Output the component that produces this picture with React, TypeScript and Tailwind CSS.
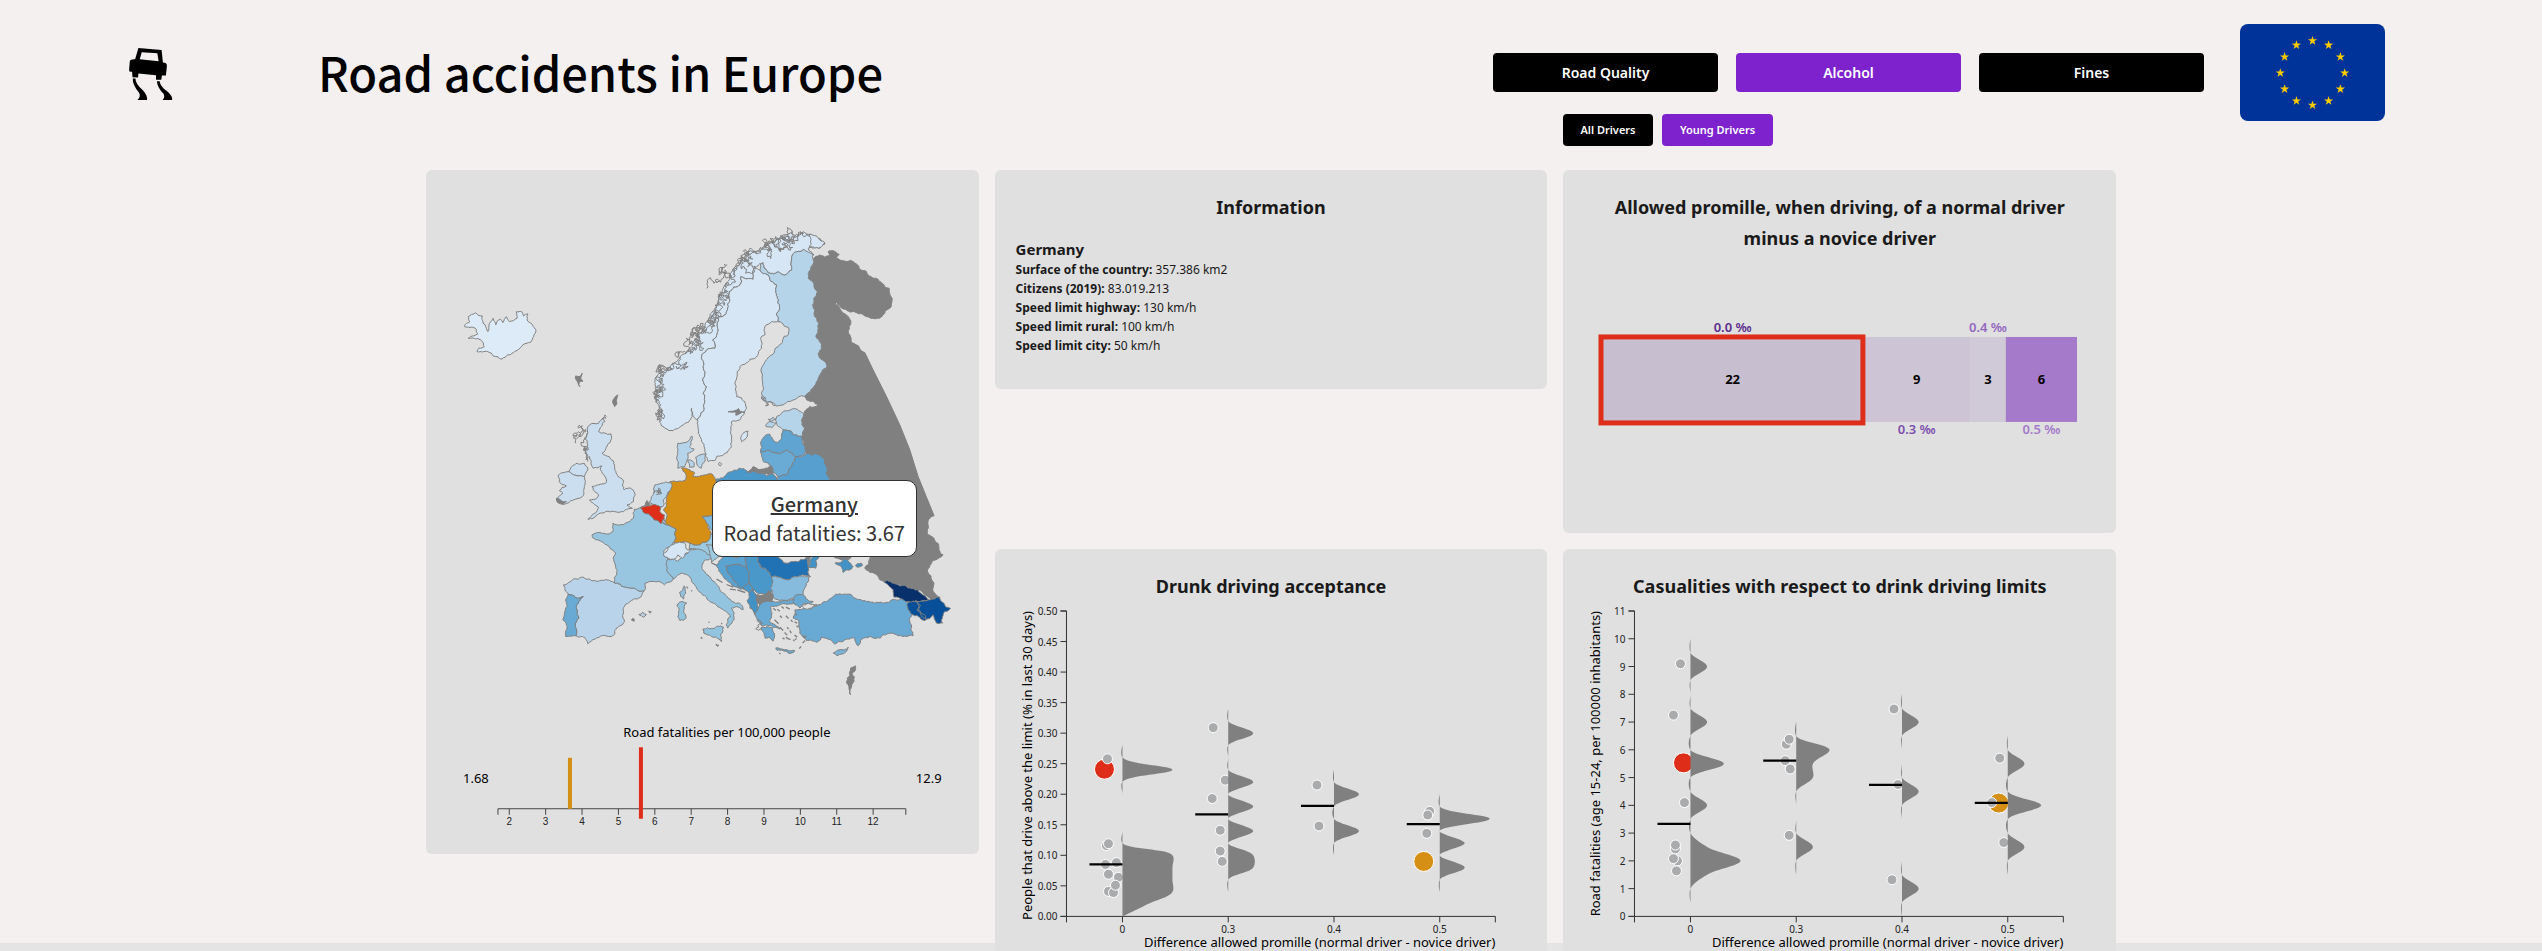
import React from "react";

const UI = "font-['Noto_Sans','Open_Sans',sans-serif]";
const SOURCE = "font-['Noto_Sans_CJK_JP','Noto_Sans',sans-serif]";

type Point = [number, number];
type Region = { pts: string; fill: string; coast?: boolean };
type Sheet = { ox: number; oy: number; sx: number; sy: number; regions: Region[] };

const GREY = "#808080";
const ICE = "#d6e6f5";
const SOFT = "#b5d4e9";

const sheets: Sheet[] = [
  {
    ox: 214, oy: 50, sx: 3, sy: 3,
    regions: [
      { fill: GREY, pts: "520,120 540,105 555,112 570,105 565,95 580,92 598,103 590,115 610,122 650,132 680,155 700,175 725,190 748,205 757,240 750,265 730,285 705,296 680,290 650,278 620,270 605,265 590,248 586,252 605,272 620,285 632,300 628,320 630,345 636,368 650,375 665,392 675,398" +
        " 676,400 700,450 725,500 740,530 780,615 810,690 835,770 860,832 883,888 865,903 865,945 894,970 910,1005 863,1055 880,1085 878,1110 898,1132 880,1145 860,1128 835,1110 805,1105 770,1093 732,1084 710,1065 675,1045 690,1015 695,980 600,900 570,780 550,715 500,705 497,690 487,650 485,600 498,570 510,560 535,555 500,540 495,530 530,485 562,440 535,400 545,385 528,350 537,310 518,255 533,215 505,175 512,150" },
      { fill: SOFT, pts: "360,130 370,128 385,158 415,155 435,165 455,150 455,110 470,95 490,88 520,105 522,125 512,150 505,175 533,215 518,255 537,310 528,350 545,385 535,400 562,440 530,485 495,530 460,540 430,555 408,558 390,545 365,535 370,500 363,450 375,425 395,405 415,380 432,350 445,345 445,322 425,308 415,305 418,270 412,230 410,195 385,165 360,150" },
      { fill: ICE, pts: "60,600 58,560 50,540 48,510 45,480 60,460 90,440 120,415 155,380 175,350 195,320 210,290 225,265 235,230 250,205 270,175 285,140 310,115 330,85 345,95 370,80 400,65 430,45 455,35 470,50 490,35 510,45 540,55 555,72 540,85 505,85 522,105 490,88 470,95 455,110 455,150 435,165 415,155 385,158 370,128 345,145 340,178 303,170 300,195 268,215 270,240 248,290 235,290 235,330 218,360 225,385 200,390 185,410 190,440 188,480 200,500 190,520 195,545 180,590 172,600 160,590 155,565 157,590 130,615 100,632 75,625" },
      { fill: ICE, pts: "345,145 360,150 385,165 410,195 412,230 418,270 415,305 395,305 375,320 375,345 362,355 365,385 330,418 305,435 292,455 285,490 290,530 315,545 320,565 300,600 275,605 272,640 275,680 262,698 230,710 225,722 205,725 195,690 180,650 172,610 180,590 195,545 190,520 200,500 188,480 190,440 185,410 200,390 225,385 218,360 235,330 235,290 248,290 270,240 268,215 300,195 303,170 340,178" },
      { fill: ICE, coast: true, pts: "62,605 58,560 54,540 52,510 50,480 64,462 92,442 122,418 157,384 177,354 197,322 212,292 227,267 239,232 254,207 274,178 289,142 313,117 333,92 347,97 372,84 402,68 432,49 455,42 470,50 490,38 512,48 540,60" },
      { fill: ICE, coast: true, pts: "57,540 59,510 57,484 70,468 98,448" },
      { fill: ICE, coast: true, pts: "160,388 180,356 200,324 214,296 230,270 240,236" },
      { fill: ICE, coast: true, pts: "280,165 296,138 318,116 336,100 350,102 376,88 404,74 430,60 444,84 462,50" },
      { fill: ICE, coast: true, pts: "200,205 222,190 250,175 270,160 255,150 238,165 245,150 262,135" },
      { fill: ICE, pts: "508,42 530,48 540,60 556,70 545,80 525,84 508,82 512,65" },
      { fill: GREY, pts: "265,576 285,572 296,566 300,575 315,577 298,582 288,586 290,578" },
      { fill: ICE, coast: true, pts: "366,538 378,548 390,545 405,557" },
      { fill: SOFT, pts: "410,590 440,573 495,578 485,600 487,650 470,645 450,632 430,630 410,610" },
      { fill: SOFT, pts: "377,618 392,605 408,610 396,624" },
      { fill: SOFT, pts: "385,598 400,592 408,598 396,604" },
      { fill: "#60a5d1", pts: "362,695 362,670 370,655 390,643 400,660 415,668 425,655 430,630 450,632 470,645 487,650 498,695 470,710 440,690 380,692" },
      { fill: "#6aabd5", pts: "362,695 380,692 440,690 470,710 450,745 445,760 415,772 395,755 395,740 370,725" },
      { fill: GREY, pts: "340,740 395,738 398,762 320,757" },
      { fill: "#569fce", pts: "470,710 500,702 550,715 570,780 570,800 410,800 415,772 445,760 450,745" },
      { fill: "#4a97ca", pts: "228,778 262,760 300,745 312,746 322,757 400,762 412,775 412,800 230,800" },
      { fill: ICE, pts: "305,665 304,650 312,638 325,634 318,655" },
      { fill: ICE, pts: "238,728 245,732 242,738 236,735" },
    ],
  },
  {
    ox: -6, oy: -10, sx: 2.8, sy: 3,
    regions: [
      { fill: "#ddeaf7", pts: "125,500 140,485 135,470 155,458 175,468 182,495 190,515 195,490 205,475 212,495 225,478 232,488 242,470 250,485 262,482 272,475 270,455 285,455 290,468 302,462 300,480 315,495 325,512 318,530 300,550 280,565 262,578 245,585 230,597 205,588 190,575 160,575 165,565 180,560 175,545 162,535 135,535 150,528 162,522 155,505" },
      { fill: GREY, pts: "436,648 446,650 454,640 450,656 456,664 446,668 448,680 442,668" },
      { fill: GREY, pts: "545,740 540,722 555,705 550,720 552,728" },
      { fill: "#cadef0", pts: "475,795 500,790 512,775 518,785 508,800 500,815 535,822 535,840 520,870 510,880 530,890 545,920 555,950 568,960 572,990 590,985 602,1000 598,1025 580,1035 595,1045 570,1055 545,1055 520,1055 500,1062 485,1075 470,1078 490,1060 500,1042 490,1035 475,1020 495,1015 500,1005 485,990 482,980 500,975 520,970 518,950 505,930 510,918 485,925 480,905 475,890 465,900 460,870 470,855 460,835 470,820" },
      { fill: "#cadef0", coast: true, pts: "470,905 462,880 470,862 458,840 468,820" },
      { fill: "#cadef0", coast: true, pts: "435,850 440,820 455,798 452,815 440,835" },
      { fill: "#cadef0", coast: true, pts: "512,780 518,765 522,770" },
      { fill: "#cadef0", pts: "440,910 460,910 470,930 460,950 440,948 415,935 425,920" },
      { fill: "#cadef0", pts: "388,945 400,938 415,935 440,948 460,950 460,980 455,1010 430,1020 400,1033 382,1020 400,1000 390,992 410,978 390,965" },
      { fill: GREY, pts: "382,1015 395,1022 410,1025 398,1033 384,1026" },
      { fill: "#b9d4ea", pts: "402,1275 430,1257 480,1262 543,1268 560,1272 600,1285 628,1292 620,1308 585,1328 570,1355 572,1380 550,1405 535,1430 490,1438 470,1452 455,1430 437,1428 435,1400 445,1375 440,1350 445,1325 457,1310 415,1303" },
      { fill: "#68aad4", pts: "415,1303 457,1310 445,1325 440,1350 445,1375 435,1400 437,1428 408,1430 410,1395 400,1380 412,1340" },
      { fill: "#b9d4ea", pts: "613,1364 624,1357 634,1364 626,1372" },
      { fill: GREY, pts: "592,1380 598,1376 600,1384" },
      { fill: GREY, pts: "640,1354 648,1356 644,1360" },
      { fill: "#98c6e0", pts: "540,1090 560,1095 575,1090 598,1075 600,1048 620,1042 635,1060 655,1065 668,1085 690,1095 718,1108 708,1150 690,1165 682,1185 695,1195 692,1215 700,1240 710,1255 685,1275 650,1265 630,1270 628,1292 600,1285 560,1272 543,1268 548,1220 548,1180 530,1160 515,1150 485,1135 482,1125 500,1118 530,1122 540,1115" },
      { fill: "#92c3df", pts: "692,1200 710,1195 722,1205 750,1180 755,1168 780,1165 815,1175 825,1190 795,1205 790,1220 800,1240 825,1265 840,1290 860,1310 895,1330 905,1350 885,1340 872,1345 880,1360 875,1385 862,1405 858,1395 870,1370 850,1350 830,1335 800,1310 775,1285 760,1265 755,1250 735,1240 710,1258 695,1240" },
      { fill: "#92c3df", pts: "720,1335 735,1325 747,1330 745,1375 728,1382 722,1370" },
      { fill: "#92c3df", pts: "727,1298 740,1278 744,1300 738,1318" },
      { fill: "#92c3df", pts: "792,1408 820,1406 850,1402 845,1445 820,1432 795,1420" },
      { fill: "#9ccae1", pts: "755,1150 780,1155 805,1145 818,1120 850,1120 850,1180 820,1190 790,1170 755,1168" },
      { fill: "#d48f14", pts: "732,925 750,928 770,940 765,950 800,945 818,942 830,965 835,1000 845,1050 790,1070 815,1120 805,1145 780,1155 755,1150 730,1148 708,1150 718,1108 690,1095 682,1050 690,1020 700,965 745,960" },
      { fill: "#7db8dc", pts: "793,1072 835,1060 835,1120 810,1105" },
      { fill: "#d6e6f5", pts: "682,1185 700,1160 715,1150 740,1148 745,1165 757,1172 742,1182 735,1195 722,1185 710,1198 695,1195" },
      { fill: "#b6d5ea", pts: "640,1030 655,1000 658,975 675,970 702,968 690,1010 682,1020 680,1040 660,1035" },
      { fill: "#de2d18", pts: "618,1045 640,1038 660,1035 675,1042 672,1055 685,1065 684,1078 675,1092 655,1080 648,1070 635,1062" },
      { fill: "#d6e6f5", pts: "678,1080 687,1082 685,1092" },
      { fill: GREY, pts: "620,1042 636,1022 645,1034" },
      { fill: SOFT, pts: "722,925 720,900 722,850 745,848 762,828 755,860 768,868 750,880 748,900 740,922" },
      { fill: SOFT, pts: "750,900 765,905 768,920 755,922" },
      { fill: SOFT, pts: "772,892 798,882 798,905 788,925 775,912" },
      { fill: SOFT, coast: true, pts: "655,1000 668,985 675,1000 662,1004" },
    ],
  },
  {
    ox: 254, oy: 370, sx: 3, sy: 3,
    regions: [
      { fill: "#9ccae1", pts: "78,15 130,15 130,50 95,68 90,45" },
      { fill: "#5ba3d0", pts: "95,70 115,72 135,50 200,45 200,80 138,78 145,100 165,125 195,150 170,142 130,110 115,85" },
      { fill: "#4a97ca", pts: "138,78 200,80 208,115 190,145 160,122 145,100" },
      { fill: "#4a97ca", pts: "200,45 235,45 245,85 270,100 280,130 275,155 235,162 210,140 208,115 200,80" },
      { fill: "#4a97ca", pts: "190,145 208,128 220,145 208,160" },
      { fill: "#4292c6", pts: "208,158 220,148 228,165 232,185 235,205 225,225 210,205" },
      { fill: "#2171b5", pts: "232,45 390,45 385,80 392,110 360,108 320,120 275,112 270,100 245,85" },
      { fill: GREY, pts: "378,45 402,45 385,78" },
      { fill: "#4292c6", pts: "398,45 430,45 408,62 408,85 385,82" },
      { fill: "#86bbdd", pts: "275,112 320,120 360,108 388,112 372,150 370,165 345,175 320,182 280,172 272,145" },
      { fill: GREY, pts: "228,165 265,153 280,165 275,185 240,195 232,185" },
      { fill: "#68aad4", pts: "225,225 235,205 240,195 275,185 320,182 342,178 345,188 300,195 272,200 275,230 268,245 300,268 275,258 245,258 232,240" },
      { fill: "#68aad4", pts: "243,264 278,264 283,280 280,304 268,292 255,295" },
      { fill: "#68aad4", coast: true, pts: "232,245 236,262 246,270" },
      { fill: "#68aad4", pts: "288,324 315,330 345,333 325,340 292,332" },
      { fill: "#68aad4", pts: "342,178 348,165 370,165 380,178 400,185 375,190 360,205 345,195" },
      { fill: "#68aad4", pts: "345,210 370,206 390,208 440,185 480,162 515,165 560,185 610,190 640,178 670,175 683,190 697,222 690,245 700,288 650,285 600,295 570,290 545,298 535,318 525,295 490,305 465,313 425,292 410,308 380,302 360,280 355,240 340,235" },
      { fill: "#e0e0e0", pts: "365,197 385,190 412,195 395,205 372,205" },
      { fill: "#78b3d9", pts: "460,340 480,330 505,322 490,342 470,347" },
      { fill: GREY, pts: "500,425 512,385 527,378 524,395 516,400 523,425 512,465" },
      { fill: "#084f99", pts: "683,190 700,184 720,185 760,178 780,172 797,200 812,206 795,215 788,250 770,250 760,225 735,242 705,228 685,210" },
      { fill: "#08306b", pts: "612,124 650,133 685,145 715,150 735,168 745,180 720,185 700,184 683,186 670,180 643,172 640,150" },
      { fill: "none", pts: "708,182 722,196 716,210 734,225 740,238 728,232 712,212 718,200" },
      { fill: GREY, pts: "455,48 515,48 498,62 480,58" },
      { fill: "#4292c6", pts: "465,70 482,68 492,56 512,70 520,80 490,98 485,82" },
      { fill: "#4292c6", pts: "527,76 545,70 548,77 530,81" },
      { fill: GREY, pts: "108,313 116,316 113,320" },
      { fill: GREY, pts: "63,293 67,294 65,297" },
    ],
  },
];

const islets = "280,205 288,212 M292,208 300,214 M305,200 312,206 M318,202 330,208 M300,228 306,234 M318,228 326,236 M333,240 338,246 M284,240 296,252 M300,262 310,272 M314,278 322,286 M322,262 326,268 M330,272 334,280 M318,292 326,298 M344,286 352,292 M308,294 314,298 M340,300 344,304 M358,326 364,320 M372,292 380,288 M368,310 376,302 M350,258 356,262 M326,296 332,300 M345,222 352,226 M344,246 352,250 M298,340 302,342 M20,140 24,146 M34,152 37,154 M86,246 89,248 M124,250 127,252 M110,118 128,128 M140,134 160,142 M150,148 168,150 M172,150 196,158 M370,288 378,298 M345,300 350,296";

function noise(x: number, y: number) {
  const v = Math.sin(x * 12.9898 + y * 78.233) * 43758.5453;
  return (v - Math.floor(v)) * 2 - 1;
}

function between(a: Point, b: Point, amount: number, floor: number): Point[] {
  const dx = b[0] - a[0];
  const dy = b[1] - a[1];
  const len = Math.hypot(dx, dy);
  if (len < floor) return [];
  const side = a[0] < b[0] || (a[0] === b[0] && a[1] < b[1]) ? 1 : -1;
  const n = noise(a[0] + b[0], a[1] + b[1]) * amount * side;
  const mid: Point = [(a[0] + b[0]) / 2 - dy * n, (a[1] + b[1]) / 2 + dx * n];
  return [...between(a, mid, amount, floor), mid, ...between(mid, b, amount, floor)];
}

function outline(sheet: Sheet, region: Region) {
  const raw = region.pts.split(" ").map((p) => p.split(",").map(Number) as Point);
  const out: Point[] = [];
  const last = region.coast ? raw.length - 1 : raw.length;
  for (let i = 0; i < last; i++) {
    const a = raw[i];
    const b = raw[(i + 1) % raw.length];
    const straight = region.fill === GREY && a[0] > 675 && b[0] > 675 && a[1] > 395 && b[1] < 890;
    out.push(a);
    if (!straight) out.push(...between(a, b, region.coast ? 0.85 : 0.17, region.coast ? 9 : 7));
  }
  if (region.coast) out.push(raw[raw.length - 1]);
  const text = out.map(([x, y]) => (sheet.ox + x / sheet.sx).toFixed(1) + " " + (sheet.oy + y / sheet.sy).toFixed(1));
  return "M" + text.join("L") + (region.coast ? "" : "Z");
}

function EuropeMap() {
  return (
    <g stroke={GREY} strokeWidth="1" strokeLinejoin="round">
      {sheets.map((sheet, s) =>
        sheet.regions.map((region, i) => (
          <path key={s + "-" + i} d={outline(sheet, region)} fill={region.coast ? "none" : region.fill} />
        )),
      )}
      <path transform="translate(254 370) scale(0.33333)" d={"M" + islets} fill="none" strokeWidth="4" />
    </g>
  );
}

function FatalityMap() {
  const ticks = [2, 3, 4, 5, 6, 7, 8, 9, 10, 11, 12];
  const x = (v: number) => 83.3 + (v - 2) * 36.4;
  return (
    <svg viewBox="0 0 553 684" className="block w-full" role="img" aria-label="Map of road fatalities in Europe">
      <EuropeMap />
      <text x="301" y="567" textAnchor="middle" fontSize="13">Road fatalities per 100,000 people</text>
      <text x="37" y="613" fontSize="13">1.68</text>
      <text x="490" y="613" fontSize="13">12.9</text>
      <path d="M72 645V639H480V645" fill="none" stroke="#444" />
      {ticks.map((t) => (
        <g key={t}>
          <path d={`M${x(t)} 639v6`} stroke="#444" />
          <text x={x(t)} y="655" textAnchor="middle" fontSize="10" fill="#222" className="font-['Liberation_Sans',sans-serif]">{t}</text>
        </g>
      ))}
      <path d="M144 588V639" stroke="#d48f14" strokeWidth="4" />
      <path d="M215 577.5V649" stroke="#de2d18" strokeWidth="4" />
    </svg>
  );
}

/* Centripetal Catmull-Rom spline through the histogram bins. */
function spline(p: Point[]) {
  let d = `M${p[0][0]} ${p[0][1]}`;
  const dist = (a: Point, b: Point) => Math.hypot(a[0] - b[0], a[1] - b[1]);
  for (let i = 0; i < p.length - 1; i++) {
    const a = p[Math.max(0, i - 1)];
    const b = p[i];
    const c = p[i + 1];
    const e = p[Math.min(p.length - 1, i + 2)];
    const l01 = dist(a, b), l12 = dist(b, c), l23 = dist(c, e);
    const s01 = Math.sqrt(l01), s12 = Math.sqrt(l12), s23 = Math.sqrt(l23);
    const ctrl = (k: 0 | 1): Point => {
      let c1 = b[k];
      let c2 = c[k];
      if (l01 > 0) {
        const A = 2 * l01 + 3 * s01 * s12 + l12;
        c1 = (b[k] * A - a[k] * l12 + c[k] * l01) / (3 * s01 * (s01 + s12));
      }
      if (l23 > 0) {
        const B = 2 * l23 + 3 * s23 * s12 + l12;
        c2 = (c[k] * B + b[k] * l23 - e[k] * l12) / (3 * s23 * (s23 + s12));
      }
      return [c1, c2];
    };
    const cx = ctrl(0);
    const cy = ctrl(1);
    d += `C${cx[0].toFixed(2)} ${cy[0].toFixed(2)} ${cx[1].toFixed(2)} ${cy[1].toFixed(2)} ${c[0]} ${c[1]}`;
  }
  return d;
}

type Run = { from: number; counts: number[] };
type Dot = [number, number, string?];
type Band = { label: string; runs: Run[]; dots: Dot[]; mean: number };
type PlotData = { max: number; step: number; bin: number; unit: number; digits: number; yLabel: string; bands: Band[] };

const RED = "#de2d18";
const ORANGE = "#d48f14";

const acceptance: PlotData = {
  max: 0.5, step: 0.05, bin: 0.02, unit: 25, digits: 2,
  yLabel: "People that drive above the limit (% in last 30 days)",
  bands: [
    {
      label: "0", mean: 0.085,
      runs: [{ from: 0, counts: [0, 1, 2, 2, 2, 2, 0, 0, 0, 0, 0, 0, 2, 0, 0] }],
      dots: [[-18, 0.241, RED], [-15, 0.258], [-16, 0.116], [-14, 0.119], [-17, 0.085], [-6, 0.088], [-14, 0.069], [-4, 0.064], [-14, 0.041], [-9, 0.039], [-7, 0.051]],
    },
    {
      label: "0.3", mean: 0.167,
      runs: [{ from: 0.04, counts: [0, 0, 1, 1, 0, 1, 0, 1, 0, 1, 0, 0, 0, 1, 0, 0] }],
      dots: [[-15, 0.309], [-3, 0.223], [-16, 0.193], [-8, 0.141], [-8, 0.107], [-6, 0.09]],
    },
    {
      label: "0.4", mean: 0.181,
      runs: [{ from: 0.1, counts: [0, 0, 1, 0, 0, 1, 0, 0] }],
      dots: [[-17, 0.215], [-15, 0.148]],
    },
    {
      label: "0.5", mean: 0.151,
      runs: [{ from: 0.04, counts: [0, 0, 1, 0, 1, 0, 2, 0, 0] }],
      dots: [[-10, 0.172], [-12, 0.166], [-13, 0.136], [-16, 0.09, ORANGE]],
    },
  ],
};

const casualties: PlotData = {
  max: 11, step: 1, bin: 0.5, unit: 16.7, digits: 0,
  yLabel: "Road fatalities (age 15-24, per 100000 inhabitants)",
  bands: [
    {
      label: "0", mean: 3.33,
      runs: [{ from: 0.5, counts: [0, 0, 1, 3, 1, 0, 0, 1, 0, 0, 2, 0, 0, 1, 0, 0, 0, 1, 0, 0] }],
      dots: [[-10, 9.1], [-17, 7.25], [-7, 5.53, RED], [-6, 4.1], [-15, 2.43], [-15, 2.57], [-13, 2], [-17, 2.08], [-14, 1.64]],
    },
    {
      label: "0.3", mean: 5.61,
      runs: [{ from: 1.5, counts: [0, 0, 1, 0, 0, 0, 0, 1, 1, 2, 0, 0] }],
      dots: [[-10, 6.2], [-7, 6.38], [-11, 5.61], [-6, 5.31], [-7, 2.92]],
    },
    {
      label: "0.4", mean: 4.74,
      runs: [{ from: 0, counts: [0, 0, 1, 0, 0, 0, 0, 0, 0, 1, 0, 0, 0, 0, 1, 0, 0] }],
      dots: [[-8, 7.47], [-4, 4.75], [-10, 1.32]],
    },
    {
      label: "0.5", mean: 4.09,
      runs: [{ from: 1.5, counts: [0, 0, 1, 0, 0, 2, 0, 0, 1, 0, 0] }],
      dots: [[-8, 5.7], [-9, 4.08, ORANGE], [-16, 4.1], [-4, 2.66]],
    },
  ],
};

function ViolinPlot({ data }: { data: PlotData }) {
  const top = 9;
  const bottom = 314.5;
  const left = 71.5;
  const right = 500.5;
  const y = (v: number) => bottom - (v / data.max) * (bottom - top);
  const ticks = Array.from({ length: Math.round(data.max / data.step) + 1 }, (_, i) => i * data.step);
  return (
    <svg viewBox="0 0 553 360" className="block w-full" role="img" aria-label={data.yLabel}>
      <path d={`M${left - 6} ${top}H${left}V${bottom}H${left - 6}`} fill="none" stroke="#333" />
      {ticks.map((t) => (
        <g key={t}>
          <path d={`M${left - 6} ${y(t)}h6`} stroke="#333" />
          <text x={left - 9} y={y(t) + 4} textAnchor="end" fontSize="10" fill="#222">{t.toFixed(data.digits)}</text>
        </g>
      ))}
      <path d={`M${left} ${bottom + 6}V${bottom}H${right}V${bottom + 6}`} fill="none" stroke="#333" />
      {data.bands.map((band, i) => {
        const cx = 127.5 + i * 105.8;
        return (
          <g key={band.label}>
            <path d={`M${cx} ${bottom}v6`} stroke="#333" />
            <text x={cx} y={bottom + 17} textAnchor="middle" fontSize="10" fill="#222">{band.label}</text>
            {band.dots.map(([dx, v, color], k) => (
              <circle key={k} cx={cx + dx} cy={y(v)} r={color ? 10 : 5} fill={color ?? "#a9abad"} stroke="#ffffff" strokeWidth="1" />
            ))}
            {band.runs.map((run) => {
              const pts = run.counts.map((c, k): Point => [cx + c * data.unit, y(run.from + k * data.bin)]);
              return <path key={run.from} d={spline(pts) + `L${cx} ${pts[pts.length - 1][1]}V${pts[0][1]}Z`} fill={GREY} />;
            })}
            <path d={`M${cx - 33} ${y(band.mean)}H${cx}`} stroke="#000" strokeWidth="2.2" />
          </g>
        );
      })}
      <text transform={`translate(37 ${top}) rotate(-90)`} textAnchor="end" fontSize="13">{data.yLabel}</text>
      <text x={right} y="345" textAnchor="end" fontSize="13">Difference allowed promille (normal driver - novice driver)</text>
    </svg>
  );
}

function PromilleBar() {
  const parts = [
    { n: 22, label: "0.0 ‰", fill: "#c7bfcf", ink: "#5b2d8c", y: 103 },
    { n: 9, label: "0.3 ‰", fill: "#cdc5d6", ink: "#7d4fae", y: 205 },
    { n: 3, label: "0.4 ‰", fill: "#d0c9d8", ink: "#9468c0", y: 103 },
    { n: 6, label: "0.5 ‰", fill: "#a57aca", ink: "#a57aca", y: 205 },
  ];
  let start = 39;
  return (
    <svg viewBox="0 0 553 260" className="block w-full" role="img" aria-label="Countries per allowed promille difference">
      {parts.map((p) => {
        const x = start;
        const w = p.n * 11.88;
        start += w;
        return (
          <g key={p.label} textAnchor="middle" fontSize="13" fontWeight="600">
            <rect x={x} y="107" width={w} height="85" fill={p.fill} />
            <text x={x + w / 2} y="154" fontWeight="700">{p.n}</text>
            <text x={x + w / 2} y={p.y - 1} fill={p.ink}>{p.label}</text>
          </g>
        );
      })}
      <rect x="38" y="107" width="262" height="86" fill="none" stroke="#de2d18" strokeWidth="5" />
    </svg>
  );
}

function Flag() {
  const star = (cx: number, cy: number) =>
    Array.from({ length: 10 }, (_, i) => {
      const r = i % 2 ? 1.85 : 4.8;
      const a = (i * Math.PI) / 5 - Math.PI / 2;
      return (cx + r * Math.cos(a)).toFixed(2) + "," + (cy + r * Math.sin(a)).toFixed(2);
    }).join(" ");
  return (
    <svg viewBox="0 0 145 97" className="h-[97px] w-[145px] shrink-0 rounded-lg" role="img" aria-label="Flag of Europe">
      <rect width="145" height="97" fill="#003399" />
      {Array.from({ length: 12 }, (_, i) => {
        const a = (i * Math.PI) / 6;
        return <polygon key={i} points={star(72.5 + 32.2 * Math.cos(a), 49 + 32.2 * Math.sin(a))} fill="#ffcc00" />;
      })}
    </svg>
  );
}

function CarLogo() {
  return (
    <svg viewBox="0 0 132 160" className="h-[53px] w-11 shrink-0" role="img" aria-label="Skidding car">
      <path fillRule="evenodd" d="M28 0L98 6 102 44Q114 44 114 54L111 83H99L97 96H81V82L28 77 27 89 10 88 9 72H2Q0 70 0 64L2 41Q3 33 18 34ZM38 13L32 34 89 40 85 16Z" />
      <path d="M11 92H19Q19 108 40 126Q56 142 54 157H25Q36 146 30 135Q10 112 11 92Z" />
      <path d="M84 100H92Q94 116 114 130Q131 144 130 157H101Q109 148 104 138Q84 118 84 100Z" />
    </svg>
  );
}

function Card({ title, children, className = "" }: { title?: string; children: React.ReactNode; className?: string }) {
  return (
    <section className={"rounded-md bg-[#e0e0e0] " + className}>
      {title && <h2 className="px-8 pt-[22px] text-center text-lg leading-[31px] font-bold text-[#1a1a1a]">{title}</h2>}
      {children}
    </section>
  );
}

const facts = [
  ["Surface of the country:", "357.386 km2"],
  ["Citizens (2019):", "83.019.213"],
  ["Speed limit highway:", "130 km/h"],
  ["Speed limit rural:", "100 km/h"],
  ["Speed limit city:", "50 km/h"],
];

export default function App() {
  return (
    <div className={"h-screen overflow-hidden bg-[#e4e4e4] text-black " + UI}>
      <div className="h-[calc(100%-8px)] bg-[#f4f0f0]">
        <header className="flex h-[170px] items-start pr-[157px] pl-[129px]">
          <div className="pt-12"><CarLogo /></div>
          <h1 className={"ml-[145px] pt-[34px] text-[47px] leading-[76px] font-medium whitespace-nowrap " + SOURCE}>Road accidents in Europe</h1>
          <nav className="ml-auto pt-[53px] text-white">
            <div className="flex gap-[18px] text-sm font-semibold">
              <button className="h-[39px] w-[225px] rounded bg-black">Road Quality</button>
              <button className="h-[39px] w-[225px] rounded bg-[#7e22ce]">Alcohol</button>
              <button className="h-[39px] w-[225px] rounded bg-black">Fines</button>
            </div>
            <div className="mt-[22px] ml-[70px] flex gap-[9px] text-[11px] font-semibold">
              <button className="h-8 w-[90px] rounded-sm bg-black">All Drivers</button>
              <button className="h-8 w-[111px] rounded-sm bg-[#7e22ce]">Young Drivers</button>
            </div>
          </nav>
          <div className="ml-9 pt-6"><Flag /></div>
        </header>

        <main className="mx-auto grid w-[66.5%] grid-cols-3 items-start gap-x-4">
          <Card className="relative">
            <FatalityMap />
            <div className={"absolute top-[310px] left-[286px] flex h-[77px] w-[205px] flex-col justify-center rounded-[10px] border border-[#333] bg-white pb-0.5 text-center text-[20px] leading-[29px] whitespace-nowrap text-[#333] " + SOURCE}>
              <strong className="font-medium underline">Germany</strong>
              <span>Road fatalities: 3.67</span>
            </div>
          </Card>

          <div className="grid grid-rows-[363px_auto] gap-y-4">
            <Card title="Information" className="h-[219px] self-start">
              <div className="px-[21px] pt-[15px] text-[12px] leading-[19px] text-[#1a1a1a]">
                <h3 className="text-[15px] leading-[22px] font-bold">Germany</h3>
                {facts.map(([name, value]) => (
                  <p key={name}><b>{name}</b> {value}</p>
                ))}
              </div>
            </Card>
            <Card title="Drunk driving acceptance" className="pb-8">
              <ViolinPlot data={acceptance} />
            </Card>
          </div>

          <div className="grid grid-rows-[363px_auto] gap-y-4">
            <Card title="Allowed promille, when driving, of a normal driver minus a novice driver">
              <div className="-mt-6"><PromilleBar /></div>
            </Card>
            <Card title="Casualities with respect to drink driving limits" className="pb-8">
              <ViolinPlot data={casualties} />
            </Card>
          </div>
        </main>
      </div>
    </div>
  );
}
